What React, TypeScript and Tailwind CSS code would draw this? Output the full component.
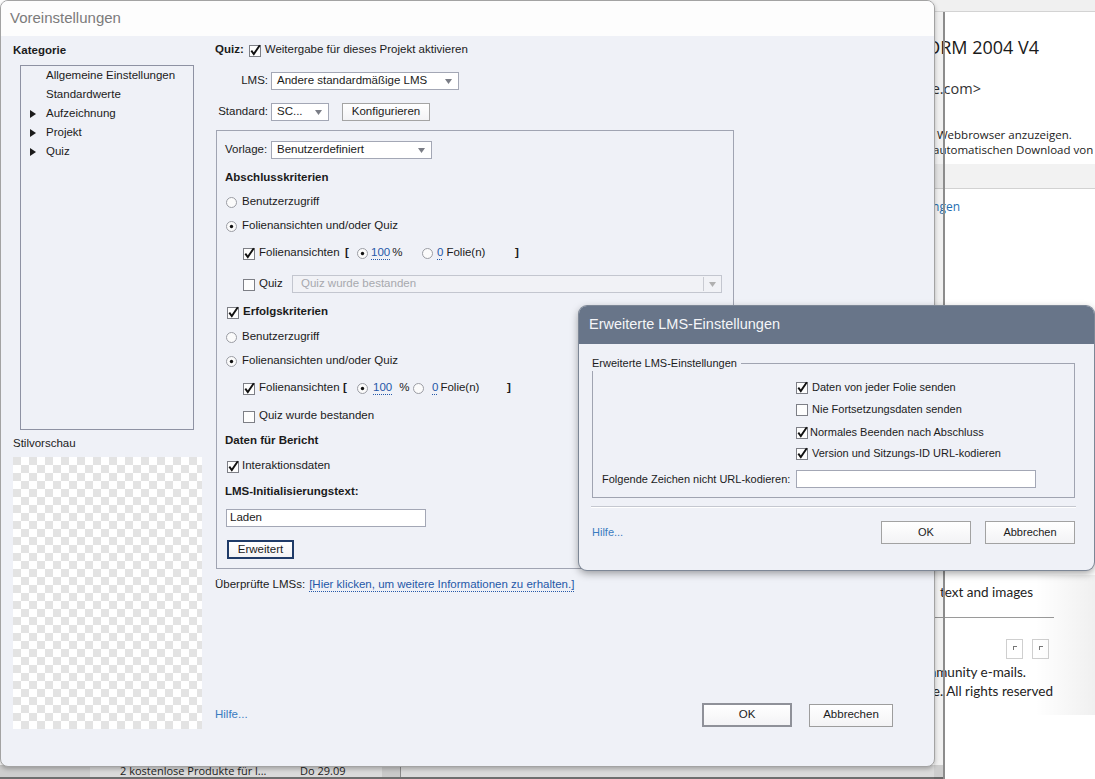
import React from "react";

const UI = "font-['Liberation_Sans',Arial,sans-serif]";

function Check({ on }: { on?: boolean }) {
  return (
    <svg width="12" height="13" viewBox="0 0 12 13" className="shrink-0">
      <rect x="0.5" y="1.5" width="11" height="11" fill="#fdfdfd" stroke="#7d7f86" />
      {on && <path d="M2.3 6.6 L4.8 10 L10.8 1.2" stroke="#111" strokeWidth="1.9" fill="none" />}
    </svg>
  );
}

function Radio({ on }: { on?: boolean }) {
  return (
    <svg width="11" height="11" viewBox="0 0 11 11" className="shrink-0">
      <circle cx="5.5" cy="5.5" r="5" fill="#fbfbfb" stroke="#9a9ca3" />
      {on && <circle cx="5.5" cy="5.5" r="1.7" fill="#111" />}
    </svg>
  );
}

function Arrow({ dim }: { dim?: boolean }) {
  return (
    <svg width="7" height="5" viewBox="0 0 7 5" className="shrink-0">
      <path d="M0 0 H7 L3.5 5 Z" fill={dim ? "#b0b0b0" : "#7a7d86"} />
    </svg>
  );
}

function Select({ text, className }: { text: string; className: string }) {
  return (
    <div className={`flex h-[18px] items-center justify-between border border-[#a3a7b5] bg-white pl-[5px] pr-[6px] ${className}`}>
      <span className="whitespace-nowrap">{text}</span>
      <Arrow />
    </div>
  );
}

function Btn({ children, className }: { children: React.ReactNode; className: string }) {
  return (
    <div className={`flex items-center justify-center bg-gradient-to-b from-white to-[#f3f3f5] ${className}`}>
      {children}
    </div>
  );
}

function Num({ v }: { v: string }) {
  return (
    <span className="text-[#2558a8] underline decoration-dotted decoration-[#2558a8] underline-offset-[3px]">{v}</span>
  );
}

export default function App() {
  return (
    <div className={`relative h-[779px] w-[1095px] overflow-hidden bg-white ${UI} text-[11.5px] text-[#1b1b1b]`}>
      {/* background mail window */}
      <div className="absolute left-[700px] top-0 h-[779px] w-[395px] overflow-hidden bg-white font-['Open_Sans',sans-serif] text-[#222]">
        <div className="h-[12px] border-b border-[#d3d3d3] bg-[#f0f0f0]" />
        <div className="mt-[22px] whitespace-nowrap pl-[205px] text-[18px] leading-[26px] text-[#1a1a1a]">SCORM 2004 V4</div>
        <div className="mt-[19px] w-[281px] whitespace-nowrap text-right text-[14.5px] leading-[20px] text-[#333]">&lt;noreply@adobe.com&gt;</div>
        <div className="mt-[28px] whitespace-nowrap pl-[237px] text-[11.5px] leading-[15px]">Webbrowser anzuzeigen.</div>
        <div className="whitespace-nowrap pl-[233px] text-[11.5px] leading-[15px]">automatischen Download von Bildern</div>
        <div className="mt-[7px] h-[25px] border-b border-[#d2d2d2] bg-[#f2f2f2]" />
        <div className="mt-[10px] w-[260px] whitespace-nowrap text-right text-[12px] leading-[16px] text-[#1f6fb2]">Einstellungen</div>
        <div className="mt-[368px] whitespace-nowrap pl-[240px] font-['Lato',sans-serif] text-[13.5px] leading-[18px]">text and images</div>
        <div className="mt-[16px] h-px w-[354px] bg-[#9a9a9a]" />
        <div className="ml-[306px] mt-[21px] flex gap-[9px]">
          <div className="flex h-[20px] w-[17px] items-start justify-center border border-[#cfcfcf] pt-[6px]">
            <div className="h-[4px] w-[4px] border-l border-t border-[#777]" />
          </div>
          <div className="flex h-[20px] w-[17px] items-start justify-center border border-[#cfcfcf] pt-[6px]">
            <div className="h-[4px] w-[4px] border-l border-t border-[#777]" />
          </div>
        </div>
        <div className="mt-[4px] w-[326px] whitespace-nowrap text-right font-['Lato',sans-serif] text-[13.5px] leading-[19px]">Adobe community e-mails.</div>
        <div className="w-[353px] whitespace-nowrap text-right font-['Lato',sans-serif] text-[13.5px] leading-[19px]">© 2016 Adobe. All rights reserved</div>
      </div>
      <div className="absolute right-0 top-[575px] h-[140px] w-[60px] bg-gradient-to-r from-transparent to-black/[0.06]" />

      {/* bottom strip of the window behind */}
      <div className="absolute bottom-0 left-0 flex h-[14px] w-[945px] items-end border-b-2 border-[#6e6e6e] bg-[#dadada] font-['Open_Sans',sans-serif] text-[11px] leading-[12px] text-[#222]">
        <div className="h-full w-[90px] bg-[#cdcdcd]" />
        <span className="ml-[30px] w-[180px] whitespace-nowrap">2 kostenlose Produkte für l...</span>
        <span className="whitespace-nowrap">Do 29.09</span>
        <div className="ml-[36px] h-full w-[18px] bg-[#c9c9c9]" />
        <div className="h-full w-px bg-[#8a8a8a]" />
      </div>

      {/* dialog edge shadow */}
      <div className="absolute left-[934px] top-[12px] h-[767px] w-[9px] bg-black/[0.06]" />
      <div className="absolute left-[943px] top-[12px] h-[767px] w-[2px] bg-[#8c8c8c]" />

      {/* main dialog */}
      <div className="absolute left-0 top-0 flex h-[767px] w-[935px] flex-col overflow-hidden rounded-[8px] border border-[#a3a3a3] bg-[#eff1f7] shadow-[0_2px_4px_rgba(0,0,0,0.25)]">
        <div className="flex h-[35px] shrink-0 items-center bg-[#fdfdfd] pl-[9px] text-[15px] text-[#7b7b7b]">Voreinstellungen</div>
        <div className="flex h-[730px]">
          {/* left column */}
          <div className="flex w-[214px] shrink-0 flex-col pl-[12px] pt-[7px]">
            <div className="h-[15px] font-bold leading-[15px]">Kategorie</div>
            <div className="ml-[7px] mt-[7px] h-[365px] w-[174px] border border-[#8e92a3]">
              {[
                ["", "Allgemeine Einstellungen"],
                ["", "Standardwerte"],
                ["t", "Aufzeichnung"],
                ["t", "Projekt"],
                ["t", "Quiz"],
              ].map(([t, label]) => (
                <div key={label} className="flex h-[19px] items-center">
                  <div className="flex w-[25px] justify-center pr-[2px]">
                    {t && (
                      <svg width="6" height="8" viewBox="0 0 6 8">
                        <path d="M0 0 L6 4 L0 8 Z" fill="#1b1b1b" />
                      </svg>
                    )}
                  </div>
                  <span>{label}</span>
                </div>
              ))}
            </div>
            <div className="mt-[6px] h-[15px] leading-[15px]">Stilvorschau</div>
            <div className="mt-[6px] h-[272px] w-[189px] bg-[image:repeating-conic-gradient(#ffffff_0_25%,#e3e3e3_0_50%)] bg-[length:16px_16px]" />
          </div>

          {/* right column */}
          <div className="flex flex-1 flex-col pt-[6px]">
            <div className="flex h-[16px] items-center">
              <span className="font-bold">Quiz:</span>
              <span className="ml-[5px]"><Check on /></span>
              <span className="ml-[4px]">Weitergabe für dieses Projekt aktivieren</span>
            </div>
            <div className="mt-[14px] flex h-[18px] items-center">
              <span className="w-[55px] pr-[2px] text-right">LMS:</span>
              <Select className="ml-px w-[188px]" text="Andere standardmäßige LMS" />
            </div>
            <div className="mt-[13px] flex h-[18px] items-center">
              <span className="w-[55px] pr-[2px] text-right">Standard:</span>
              <Select className="ml-px w-[58px]" text="SC..." />
              <Btn className="ml-[13px] h-[18px] w-[88px] border border-[#a4a4a4]">Konfigurieren</Btn>
            </div>

            {/* settings group */}
            <div className="ml-px mt-[9px] w-[518px] border border-[#a0a4b2] pb-[9px] pl-[8px] pt-[10px]">
              <div className="flex h-[18px] items-center">
                <span className="w-[46px]">Vorlage:</span>
                <Select className="w-[161px]" text="Benutzerdefiniert" />
              </div>
              <div className="mt-[9px] flex h-[20px] items-center font-bold">Abschlusskriterien</div>
              <div className="mt-[4px] flex h-[20px] items-center pl-px">
                <Radio /><span className="ml-[5px]">Benutzerzugriff</span>
              </div>
              <div className="mt-[4px] flex h-[20px] items-center pl-px">
                <Radio on /><span className="ml-[5px]">Folienansichten und/oder Quiz</span>
              </div>
              <div className="mt-[7px] flex h-[20px] items-center pl-[18px]">
                <Check on />
                <span className="ml-[4px] w-[86px]">Folienansichten</span>
                <span className="w-[12px] font-bold">[</span>
                <Radio on />
                <span className="ml-[3px] w-[51px] whitespace-nowrap"><Num v="100" /><span className="ml-[2px]">%</span></span>
                <Radio />
                <span className="ml-[4px] w-[78px] whitespace-nowrap"><Num v="0" /><span className="ml-[3px]">Folie(n)</span></span>
                <span className="font-bold">]</span>
              </div>
              <div className="mt-[11px] flex h-[20px] items-center pl-[18px]">
                <Check />
                <span className="ml-[4px] w-[33px]">Quiz</span>
                <div className="flex h-[18px] w-[430px] items-center justify-between border border-[#c3c6cf] bg-[#f1f2f6] pl-[8px] pr-[5px] text-[#a7a9ae]">
                  <span>Quiz wurde bestanden</span>
                  <div className="flex items-center gap-[5px]">
                    <div className="h-[14px] w-px bg-[#c9cbd2]" />
                    <Arrow dim />
                  </div>
                </div>
              </div>
              <div className="mt-[8px] flex h-[20px] items-center pl-[2px]">
                <Check on /><span className="ml-[4px] font-bold">Erfolgskriterien</span>
              </div>
              <div className="mt-[5px] flex h-[20px] items-center pl-px">
                <Radio /><span className="ml-[5px]">Benutzerzugriff</span>
              </div>
              <div className="mt-[4px] flex h-[20px] items-center pl-px">
                <Radio on /><span className="ml-[5px]">Folienansichten und/oder Quiz</span>
              </div>
              <div className="mt-[7px] flex h-[20px] items-center pl-[18px]">
                <Check on />
                <span className="ml-[4px] w-[84px]">Folienansichten</span>
                <span className="w-[14px] font-bold">[</span>
                <Radio on />
                <span className="ml-[5px] w-[40px] whitespace-nowrap"><Num v="100" /><span className="ml-[7px]">%</span></span>
                <Radio />
                <span className="ml-[8px] w-[75px] whitespace-nowrap"><Num v="0" /><span className="ml-[2px]">Folie(n)</span></span>
                <span className="font-bold">]</span>
              </div>
              <div className="mt-[8px] flex h-[20px] items-center pl-[18px]">
                <Check /><span className="ml-[4px]">Quiz wurde bestanden</span>
              </div>
              <div className="mt-[5px] flex h-[20px] items-center font-bold">Daten für Bericht</div>
              <div className="mt-[5px] flex h-[20px] items-center pl-[2px]">
                <Check on /><span className="ml-[3px]">Interaktionsdaten</span>
              </div>
              <div className="mt-[6px] flex h-[20px] items-center font-bold">LMS-Initialisierungstext:</div>
              <div className="ml-px mt-[7px] flex h-[18px] w-[200px] items-center border border-[#a3a7b5] bg-white pl-[3px]">Laden</div>
              <Btn className="ml-[2px] mt-[13px] h-[19px] w-[67px] border-2 border-[#1f3b68]">Erweitert</Btn>
            </div>

            <div className="mt-[8px] flex h-[16px] items-center">
              <span>Überprüfte LMSs:</span>
              <span className="ml-[4px] text-[#2558a8] underline decoration-dotted underline-offset-[3px]">[Hier klicken, um weitere Informationen zu erhalten.]</span>
            </div>

            <div className="mb-[39px] mt-auto flex h-[24px] items-center justify-between pr-[41px]">
              <span className="text-[#3a7cc0]">Hilfe...</span>
              <div className="flex items-center gap-[17px]">
                <Btn className="h-[24px] w-[90px] border-2 border-[#8f9199]">OK</Btn>
                <Btn className="h-[23px] w-[84px] border border-[#9d9d9d]">Abbrechen</Btn>
              </div>
            </div>
          </div>
        </div>
      </div>

      {/* advanced LMS modal */}
      <div className="absolute left-[579px] top-[306px] flex h-[264px] w-[515px] flex-col overflow-hidden rounded-[8px] bg-[#eff1f7] text-[11px] shadow-[0_3px_8px_rgba(0,0,0,0.4)] ring-1 ring-[#7d8796]">
        <div className="flex h-[38px] shrink-0 items-center bg-[#687589] pl-[10px] text-[14.5px] text-[#f4f5f8]">Erweiterte LMS-Einstellungen</div>
        <fieldset className="ml-[13px] mr-[19px] mt-[12px] border border-[#a0a4b1] pb-[8px]">
          <legend className="-ml-px pr-[4px] leading-[15px]">Erweiterte LMS-Einstellungen</legend>
          <div className="mt-[6px] flex h-[20px] items-center pl-[203px]">
            <Check on /><span className="ml-[4px]">Daten von jeder Folie senden</span>
          </div>
          <div className="mt-[2px] flex h-[20px] items-center pl-[203px]">
            <Check /><span className="ml-[4px]">Nie Fortsetzungsdaten senden</span>
          </div>
          <div className="mt-[3px] flex h-[20px] items-center pl-[203px]">
            <Check on /><span className="ml-[2px]">Normales Beenden nach Abschluss</span>
          </div>
          <div className="mt-px flex h-[20px] items-center pl-[203px]">
            <Check on /><span className="ml-[4px]">Version und Sitzungs-ID URL-kodieren</span>
          </div>
          <div className="mt-[6px] flex h-[20px] items-center pl-[9px]">
            <span className="w-[194px] whitespace-nowrap">Folgende Zeichen nicht URL-kodieren:</span>
            <div className="h-[18px] w-[240px] border border-[#a3a7b5] bg-white" />
          </div>
        </fieldset>
        <div className="ml-[12px] mr-[18px] mt-[8px] h-[2px] border-b border-t border-b-white border-t-[#c5c8d0]" />
        <div className="ml-[13px] mr-[19px] mt-[13px] flex h-[23px] items-center justify-between">
          <span className="text-[#3a7cc0]">Hilfe...</span>
          <div className="flex gap-[14px]">
            <Btn className="h-[23px] w-[90px] border border-[#a2a2a2]">OK</Btn>
            <Btn className="h-[23px] w-[90px] border border-[#a2a2a2]">Abbrechen</Btn>
          </div>
        </div>
      </div>
    </div>
  );
}
